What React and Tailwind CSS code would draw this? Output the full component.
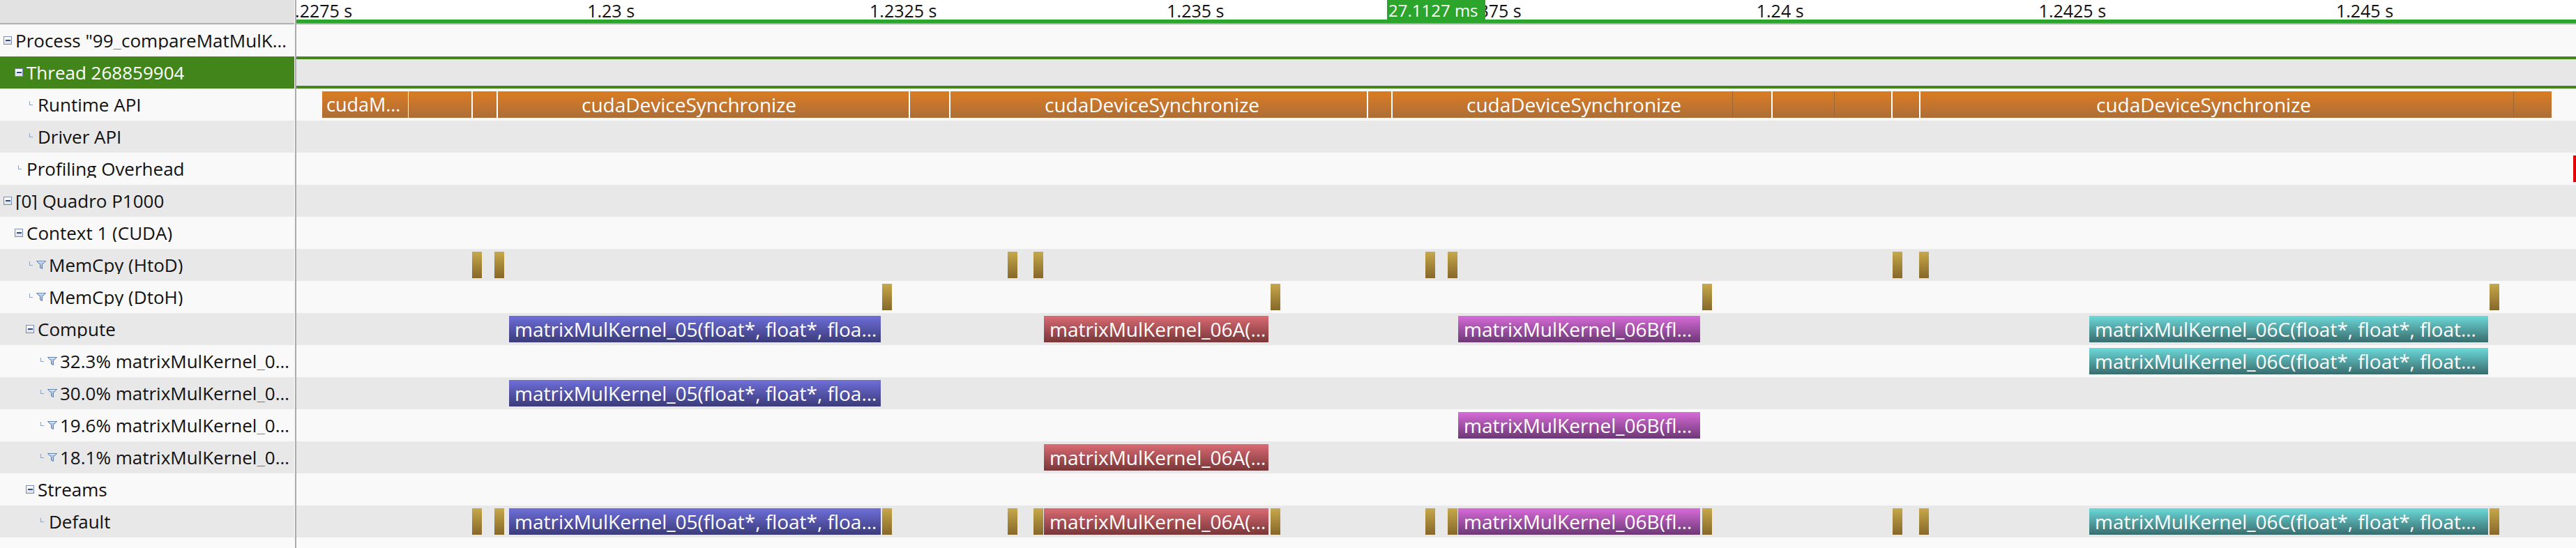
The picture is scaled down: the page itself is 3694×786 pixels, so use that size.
import React from "react";

const X0 = 425; // timeline origin in page px

const TREE = [
  { label: 'Process "99_compareMatMulKernels" (31548)', kind: "box", pad: "pl-[5px]" },
  { label: "Thread 268859904", kind: "box", pad: "pl-[21px]", selected: true },
  { label: "Runtime API", kind: "leaf", pad: "pl-[42px]" },
  { label: "Driver API", kind: "leaf", pad: "pl-[42px]" },
  { label: "Profiling Overhead", kind: "leaf", pad: "pl-[26px]" },
  { label: "[0] Quadro P1000", kind: "box", pad: "pl-[5px]" },
  { label: "Context 1 (CUDA)", kind: "box", pad: "pl-[21px]" },
  { label: "MemCpy (HtoD)", kind: "filter", pad: "pl-[42px]" },
  { label: "MemCpy (DtoH)", kind: "filter", pad: "pl-[42px]" },
  { label: "Compute", kind: "box", pad: "pl-[37px]" },
  { label: "32.3% matrixMulKernel_06C(float*, float*, float*, int)", kind: "filter", pad: "pl-[58px]" },
  { label: "30.0% matrixMulKernel_05(float*, float*, float*, int)", kind: "filter", pad: "pl-[58px]" },
  { label: "19.6% matrixMulKernel_06B(float*, float*, float*, int)", kind: "filter", pad: "pl-[58px]" },
  { label: "18.1% matrixMulKernel_06A(float*, float*, float*, int)", kind: "filter", pad: "pl-[58px]" },
  { label: "Streams", kind: "box", pad: "pl-[37px]" },
  { label: "Default", kind: "leaf", pad: "pl-[58px]" },
];

const TICKS = ["1.2275 s", "1.23 s", "1.2325 s", "1.235 s", "1.2375 s", "1.24 s", "1.2425 s", "1.245 s"];

// runtime api segments: [start, end, label, labelCenter, subtle divider]
const API = [
  [462, 585, "cudaMemcpy", null],
  [586, 676],
  [678, 712],
  [714, 1303, "cudaDeviceSynchronize", 988],
  [1305, 1361],
  [1363, 1960, "cudaDeviceSynchronize", 1652],
  [1962, 1995],
  [1997, 2540, "cudaDeviceSynchronize", 2257, 2484],
  [2542, 2712, null, null, 2630],
  [2714, 2752],
  [2754, 3659, "cudaDeviceSynchronize", 3160, 3604],
];

const K05 = { x: 730, w: 533, name: "matrixMulKernel_05(float*, float*, float*, int)", cls: "from-[#6f6fdb] to-[#3b3b7b]" };
const K06A = { x: 1497, w: 322, name: "matrixMulKernel_06A(float*, float*, float*, int)", cls: "from-[#db6b74] to-[#793739]" };
const K06B = { x: 2091, w: 347, name: "matrixMulKernel_06B(float*, float*, float*, int)", cls: "from-[#d96bdb] to-[#6d3875]" };
const K06C = { x: 2996, w: 572, name: "matrixMulKernel_06C(float*, float*, float*, int)", cls: "from-[#6cdada] to-[#396d6f]" };

const HTOD = [677, 709, 1445, 1482, 2044, 2076, 2714, 2752];
const DTOH = [1265, 1822, 2441, 3570];

function MinusBox() {
  return (
    <div className="w-[12px] h-[12px] shrink-0 border border-[#7d8daf] bg-linear-to-b from-[#ffffff] to-[#dbe2ec] flex items-center justify-center">
      <div className="w-[7px] h-[2px] bg-[#2d4a85]" />
    </div>
  );
}

function Elbow() {
  return <div className="w-[5px] h-[6px] shrink-0 mb-[5px] border-l border-b border-[#93a3bf]" />;
}

function Funnel() {
  return (
    <svg width="14" height="12" viewBox="0 0 14 12" className="shrink-0">
      <path d="M0.5 0.5 H13.5 L8.5 5.5 V11.5 L5.5 10 V5.5 Z" fill="#b4c6e0" stroke="#5c79a8" strokeWidth="1" />
      <path d="M2.5 1.5 H11.5" stroke="#ffffff" strokeWidth="1" />
    </svg>
  );
}

function TreeRow({ row, i }) {
  const bg = row.selected ? "bg-[#42861b] text-white" : i % 2 === 0 ? "bg-[#f9f9f9] text-[#111]" : "bg-[#e8e8e8] text-[#111]";
  return (
    <div className={`h-[46px] flex items-center pr-[4px] ${row.pad} ${bg}`}>
      {row.kind === "box" && <MinusBox />}
      {row.kind !== "box" && <Elbow />}
      {row.kind === "filter" && (
        <span className="ml-[5px] flex">
          <Funnel />
        </span>
      )}
      <span
        className={`truncate text-[26px] leading-none ${
          row.kind === "box" ? "ml-[5px]" : row.kind === "leaf" ? "ml-[7px]" : "ml-[4px]"
        }`}
      >
        {row.label}
      </span>
    </div>
  );
}

function Kernel({ k }) {
  return (
    <div
      className={`absolute top-[4px] h-[38px] bg-linear-to-b ${k.cls} text-white text-[28px] leading-[38px] pl-[8px] pr-[2px] truncate`}
      style={{ left: k.x - X0, width: k.w }}
    >
      {k.name}
    </div>
  );
}

function Mem({ x }) {
  return (
    <div
      className="absolute top-[4px] h-[38px] w-[14px] bg-linear-to-b from-[#c7a84b] to-[#86682a]"
      style={{ left: x - X0 }}
    />
  );
}

function ApiRow() {
  return (
    <>
      <div className="absolute top-[4px] h-[38px] bg-white" style={{ left: 462 - X0, width: 3659 - 462 }} />
      {API.map(([s, e, label, c, sub], i) => (
        <div
          key={i}
          className="absolute top-[4px] h-[38px] bg-linear-to-b from-[#dc7c21] to-[#ac6e35] overflow-hidden"
          style={{ left: s - X0, width: e - s }}
        >
          {sub && <div className="absolute top-0 bottom-0 w-[1px] bg-[#9e6634]" style={{ left: sub - s }} />}
          {label && c === null && (
            <div className="text-white text-[27px] leading-[38px] pl-[6px] pr-[2px] truncate">{label}</div>
          )}
          {label && c !== null && (
            <div
              className="absolute top-0 w-[500px] text-center text-white text-[28px] leading-[38px]"
              style={{ left: c - s - 250 }}
            >
              {label}
            </div>
          )}
        </div>
      ))}
    </>
  );
}

function TimelineRow({ i }) {
  if (i === 1) {
    return <div className="h-[46px] border-y-4 border-[#43861c] bg-[#e7e7e7]" />;
  }
  const bg = i % 2 === 0 ? "bg-[#f9f9f9]" : "bg-[#e8e8e8]";
  return (
    <div className={`h-[46px] relative ${bg}`}>
      {i === 2 && <ApiRow />}
      {i === 4 && <div className="absolute top-[4px] h-[38px] w-[4px] bg-[#e00000]" style={{ left: 3690 - X0 }} />}
      {i === 7 && HTOD.map((x) => <Mem key={x} x={x} />)}
      {i === 8 && DTOH.map((x) => <Mem key={x} x={x} />)}
      {i === 9 && [K05, K06A, K06B, K06C].map((k) => <Kernel key={k.x} k={k} />)}
      {i === 10 && <Kernel k={K06C} />}
      {i === 11 && <Kernel k={K05} />}
      {i === 12 && <Kernel k={K06B} />}
      {i === 13 && <Kernel k={K06A} />}
      {i === 15 && (
        <>
          {HTOD.map((x) => <Mem key={x} x={x} />)}
          {[K05, K06A, K06B, K06C].map((k) => <Kernel key={k.x} k={k} />)}
          {DTOH.map((x) => <Mem key={x} x={x} />)}
        </>
      )}
    </div>
  );
}

export default function App() {
  return (
    <div className="w-[3694px] h-[786px] flex bg-[#fafafa] overflow-hidden" style={{ fontFamily: '"Open Sans", "Noto Sans", sans-serif' }}>
      {/* tree panel */}
      <div className="w-[422px] shrink-0 flex flex-col">
        <div className="h-[33px] bg-[#e2e2e2]" />
        <div className="h-[2px] bg-[#b0b0b0]" />
        {TREE.map((r, i) => (
          <TreeRow key={i} row={r} i={i} />
        ))}
      </div>
      <div className="w-[1px] shrink-0" />
      <div className="w-[2px] shrink-0 bg-[#ababab]" />

      {/* timeline */}
      <div className="flex-1 flex flex-col overflow-hidden">
        <div className="h-[28px] relative bg-white">
          {TICKS.map((t, k) => (
            <div
              key={t}
              className="absolute top-[1px] w-[200px] text-center text-[25px] leading-[28px] text-[#111] whitespace-nowrap"
              style={{ left: 457 + 419.14 * k - X0 - 100 }}
            >
              {t}
            </div>
          ))}
          <div
            className="absolute top-0 h-[28px] bg-[#2ca52c] text-white text-[24px] leading-[29px] px-[2px] whitespace-nowrap overflow-hidden"
            style={{ left: 1989 - X0, width: 141 }}
          >
            27.1127 ms
          </div>
        </div>
        <div className="h-[5px] bg-[#2ca52c]" />
        <div className="h-[2px] bg-[#a9a9a9]" />
        {TREE.map((_, i) => (
          <TimelineRow key={i} i={i} />
        ))}
      </div>
    </div>
  );
}
